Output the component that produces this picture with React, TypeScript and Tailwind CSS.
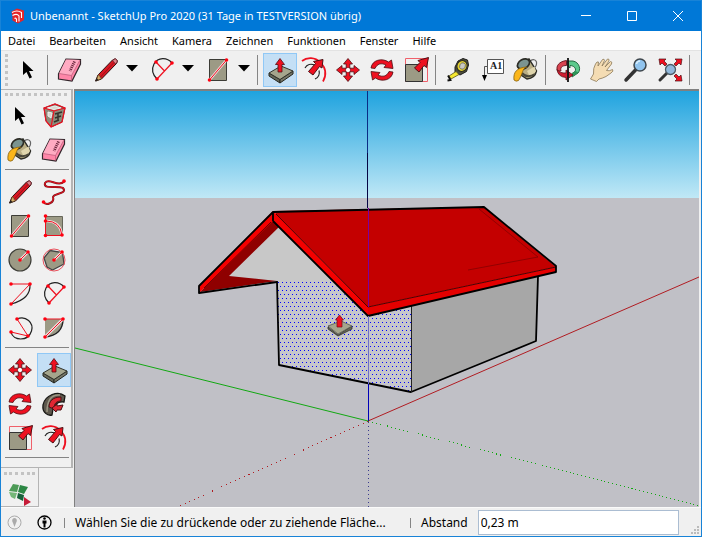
import type { ReactNode } from "react";

const RED = "#ee1020";
const STONE = "#9c9a85";

function Dots({ at }: { at: [number, number][] }) {
  return (
    <>
      {at.map(([x, y]) => (
        <circle key={`${x}-${y}`} cx={x} cy={y} r="1.8" fill="#ff0010" />
      ))}
    </>
  );
}

const icons: Record<string, ReactNode> = {
  select: <path d="M12 8 V22 L15.5 19 L18.5 25.5 L21 24.3 L18 18 H22.5 Z" fill="#000" />,
  eraser: (
    <>
      <path d="M13 6 L27.500 6.500 L27.500 11 L19 28 L5.500 26 L5.500 21 Z" fill="#ff86a8" stroke="#33262b" strokeWidth="1.200" />
      <path d="M13 6.500 L27 7 L18.500 22.500 L6 20.500 Z" fill="#ffabc2" />
      <path d="M6 20.500 L18.500 22.500 L27 7 M18.500 22.500 V27.500" fill="none" stroke="#c0607e" strokeWidth=".8" />
      <path d="M21.500 8.500 L17 18" stroke="#6d2a40" strokeWidth="2.800" strokeDasharray="1.200 .8" />
    </>
  ),
  pencil: (
    <>
      <path d="M6.500 28 L9 22 L23.500 7 Q26.500 4.500 28 7 Q29 9 27 11 L12.500 26 Z" fill="#d91722" stroke="#301010" />
      <path d="M9.500 21.500 L12.500 25.500 L7 28 Z" fill="#d7b06d" stroke="#5c4520" strokeWidth=".7" />
      <path d="M23.500 7.500 Q26.500 4.500 28 7 Q29 9 26.500 11 Z" fill="#dd8089" stroke="#5e2028" strokeWidth=".7" />
      <path d="M11 24.500 L25 9.500" stroke="#8f0f18" strokeWidth=".8" />
      <path d="M6.500 28.500 l3 -1.500 l-2 -2 Z" fill="#222" />
    </>
  ),
  arc: (
    <>
      <path d="M27 10 C22 4 13 4 9 11 C6 17 8 22 12 26" fill="none" stroke="#222" strokeWidth="1.200" />
      <path d="M27 10 L12 26 M11 9 L19.500 18" stroke={RED} strokeWidth="1.200" />
      <Dots at={[[11, 9], [27, 10], [12, 26]]} />
    </>
  ),
  rect: (
    <>
      <path d="M8.500 6.500 H25.500 V27.500 H8.500 Z" fill={STONE} stroke="#3c3c36" />
      <path d="M8.500 27 L25.500 7" stroke="#f4dede" strokeWidth="2.600" />
      <path d="M8.500 27 L25.500 7" stroke={RED} />
      <Dots at={[[8.500, 27], [25.500, 7]]} />
    </>
  ),
  push: (
    <>
      <path d="M6 20 L17 26.500 V30 L6 23 Z" fill="#66675a" stroke="#25261f" />
      <path d="M30 18 L17 26.500 V30 L30 21 Z" fill="#777768" stroke="#25261f" />
      <path d="M6 20 L18 13 L30 18 L17 26.500 Z" fill="#a5a58d" stroke="#33342b" />
      <path d="M17 5.500 L21.500 11.500 H19 V19 H15 V11.500 H12.500 Z" fill={RED} stroke="#501014" strokeWidth=".8" />
    </>
  ),
  offset: (
    <>
      <path d="M5 8 C10 4 18 4 23.500 9.500 C29 15 29.500 22 26 28.500" fill="none" stroke={RED} strokeWidth="1.700" />
      <path d="M8 15 C10 11.500 14 10.500 17.500 12 M22 17.500 C23 21 21.500 24.500 18 26" fill="none" stroke="#222" strokeWidth="1.200" />
      <path d="M26 6.500 L25 15 L22.500 13.500 L16 22 L11.500 18.500 L18.500 10.500 L16.500 8.500 Z" fill={RED} stroke="#4b1014" />
    </>
  ),
  move: (
    <g fill={RED} stroke="#4b1014" strokeWidth=".8">
      {[0, 90, 180, 270].map((r) => (
        <path key={r} transform={`rotate(${r} 17 17)`} d="M17 5.500 L21.500 11 H18.800 V15 H15.200 V11 H12.500 Z" />
      ))}
      <path d="M17 14.500 L19.500 17 L17 19.500 L14.500 17 Z" fill="#fff" stroke="none" />
    </g>
  ),
  rotate: (
    <g fill={RED} stroke="#4b1014" strokeWidth=".8">
      {[0, 180].map((r) => (
        <path key={r} transform={`rotate(${r} 17 17)`} d="M6 15 C7 7 17 4.500 23.500 9 L26.500 7 L28 15.500 L19 14.500 L21 12 C16 9.500 12 11 10 15.500 Z" />
      ))}
    </g>
  ),
  scale: (
    <>
      <path d="M6.500 5.500 H28.500 V28.500 H6.500 Z" fill="none" stroke="#f0606a" />
      <path d="M6.500 11.500 H23.500 V28.500 H6.500 Z" fill={STONE} stroke="#333" />
      <path d="M29.500 4.500 L27.500 14.500 L25 12.500 L20 19 L15.500 15 L21 9.500 L19 7.500 Z" fill={RED} stroke="#4b1014" />
    </>
  ),
  tape: (
    <>
      <path d="M14 14 L17 8 L22 5.500 L26.500 7 L27.500 12 L25.500 18.500 L19 22 L14 19 Z" fill="#4d4e3d" stroke="#1c1c1c" />
      <ellipse cx="21" cy="13" rx="5" ry="5.500" transform="rotate(25 21 13)" fill="#e5d331" stroke="#2a2a20" />
      <ellipse cx="21.500" cy="13" rx="2.800" ry="3.300" transform="rotate(25 21.5 13)" fill="#c9c9c2" stroke="#6e6e60" strokeWidth=".8" />
      <path d="M18 21.500 L10 26 L8 23 L15 18.500 Z" fill="#f5e830" stroke="#55501a" strokeWidth=".8" />
      <path d="M7 22.500 L9.500 27 L6.500 27.500" fill="none" stroke="#111" strokeWidth="1.800" />
    </>
  ),
  text: (
    <>
      <path d="M12.500 6.500 H28.500 V20.500 H12.500 Z" fill="#fff" stroke="#555" />
      <text x="15" y="16" fontSize="10" fontFamily="Liberation Serif, serif" fontWeight="700" fill="#222">A1</text>
      <path d="M12 13.500 H9.500 V23" fill="none" stroke="#555" />
      <path d="M7 22 H12 L9.500 28 Z" fill="#000" />
    </>
  ),
  paint: (
    <>
      <path d="M21 8 Q26 5 27.500 9 Q28 13 25 15" fill="none" stroke="#666" strokeWidth="1.200" />
      <path d="M9 12 L20 6 L27.500 18 Q26 25 18 26 L12 22 Z" fill="#b9ae85" stroke="#2c2c26" strokeWidth="1.400" />
      <path d="M18 18 L25.500 13.500 L27 18 Q25 22 20.500 23 Z" fill="#e0d6ad" />
      <path d="M13 20 Q18 26 26 21" fill="none" stroke="#4a483a" strokeWidth="2" />
      <ellipse cx="14.500" cy="11" rx="6.500" ry="4.500" transform="rotate(-30 14.500 11)" fill="#7b9490" stroke="#2c2c26" strokeWidth="1.700" />
      <path d="M18 14 C13 15 14 21 9.500 27.500 Q7 29 5 27 C4 19 8 14.500 18 14 Z" fill="#fbb61b" stroke="#84600f" strokeWidth=".8" />
    </>
  ),
  orbit: (
    <>
      <path d="M17 8 H22 C29 9.500 30 17 27 20 L21 24 V20.500 L24 18.500 C26 15 22 12.500 19 12.500 V15 L17 13 Z" fill="#5cc98c" stroke="#175d34" strokeWidth=".9" />
      <path d="M24.500 18 L27.500 19.500 L21 24 V20.500 Z" fill="#2f9558" />
      <path d="M15.500 7.500 C8 8.500 4.500 13 6.500 18 L10 18 C9 14.500 11 12.500 15.500 12.500 Z" fill="#d84450" stroke="#601018" strokeWidth=".9" />
      <path d="M6 16.500 Q9 20.500 15 20 V17 L22 22 L15 27 V24.500 Q7 24 6 16.500 Z" fill="#cf1c30" stroke="#601018" strokeWidth=".8" />
      <path d="M17 5 V29" stroke="#111" strokeWidth="1.800" />
    </>
  ),
  hand: (
    <path
      d="M5.500 26 L8.500 21 Q8 15 10.500 11 Q12 8 13.500 9 L13 13 L17.500 6.500 Q19.500 5.500 19.500 7.500 L17 13 L22.500 6 Q24.500 5.500 24 8 L20 14 L25.500 8.500 Q27.500 8.500 26.500 11 L21.500 17.500 Q24 18.500 27.500 16.500 Q29 18 26 20 L21 23.500 Q17 25.500 14 26 L11.500 28.500 Z"
      fill="#f4dcb3"
      stroke="#8b7858"
      strokeWidth=".8"
    />
  ),
  zoom: (
    <>
      <path d="M16.500 17 L7 27" stroke="#333" strokeWidth="3.500" strokeLinecap="round" />
      <circle cx="21" cy="12" r="6" fill="#91c4ee" stroke="#3e464c" strokeWidth="1.500" />
      <path d="M17.500 11 Q18 8 21 8" fill="none" stroke="#d9effe" strokeWidth="1.500" />
    </>
  ),
  extents: (
    <>
      <path d="M14 20 L7 27" stroke="#333" strokeWidth="3" strokeLinecap="round" />
      <g fill={RED} stroke="#4b1014" strokeWidth=".7">
        <path d="M6 6 H13 L11 8 L14 11 L12 13 L9 10 L7 12 Z" />
        <path d="M29 6 H22 L24 8 L21 11 L23 13 L26 10 L28 12 Z" />
        <path d="M29 28 H22 L24 26 L21 23 L23 21 L26 24 L28 22 Z" />
      </g>
      <circle cx="17.500" cy="16.500" r="5" fill="#91b9dc" stroke="#4c5b66" strokeWidth="1.300" />
    </>
  ),
  component: (
    <>
      <path d="M7 9 L18 5 L28 9 L25 23 L14 28 L9 22 Z" fill="#8d8b7a" stroke="#444" />
      <path d="M10 9 L18 7 L24 9 L17 10.500 Z M11 13 L15 14 L14 19 L11 17 Z" fill="#dad8ce" stroke="#eee" />
      <path d="M18 15 L25 13 M18 19 L24 17 M17 23 L22 21 M21 14 V21" stroke="#33332c" strokeWidth="1.500" />
      <path d="M7 9 L17 12 L28 9 L25 23 L14 28 L9 22 Z M17 12 L14 28 M7 9 L18 5 L28 9" fill="none" stroke={RED} strokeWidth="1.200" />
    </>
  ),
  freehand: (
    <>
      <path d="M28 6 C21 13 12 2 8 8 C6 15 20 10 26 13 C31 19 17 18 16 22 C18 28 9 31 6.500 27" fill="none" stroke="#7d1519" strokeWidth="2" />
      <path d="M28 6 C21 13 12 2 8 8 C6 15 20 10 26 13 C31 19 17 18 16 22 C18 28 9 31 6.500 27" fill="none" stroke={RED} />
      <Dots at={[[27, 6], [6.500, 27]]} />
    </>
  ),
  rotRect: (
    <>
      <path d="M8.500 7.500 H25.500 V26.500 H8.500 Z" fill={STONE} stroke="#666659" />
      <path d="M9 12 Q23 12 25 26" fill="none" stroke="#f4dede" strokeWidth="2.600" />
      <path d="M8.500 7 V26.500 H25 M9 12 Q23 12 25 26" fill="none" stroke={RED} />
      <Dots at={[[8.500, 7], [8.500, 12], [8.500, 26.500], [25, 26]]} />
    </>
  ),
  circle: (
    <>
      <circle cx="17" cy="17" r="11" fill={STONE} stroke="#3d3d37" strokeWidth="1.200" />
      <path d="M17 17 L25 9" stroke="#f4dede" strokeWidth="2.600" />
      <path d="M17 17 L25 9" stroke={RED} />
      <Dots at={[[17, 17], [25, 9]]} />
    </>
  ),
  polygon: (
    <>
      <path d="M7 15 L13 7.500 L25.500 9.500 L27 21 L15.500 27 L10 24 Z" fill={STONE} stroke="#444" strokeWidth="1.300" />
      <circle cx="17" cy="17" r="11" fill="none" stroke="#e9525d" />
      <path d="M17 17 L25 9" stroke="#f4dede" strokeWidth="2.600" />
      <path d="M17 17 L25 9" stroke={RED} />
      <Dots at={[[17, 17], [25, 9]]} />
    </>
  ),
  arcCenter: (
    <>
      <path d="M27 7 Q28 22 8 27" fill="none" stroke="#222" strokeWidth="1.200" />
      <path d="M8 7 H27 L8 27" fill="none" stroke={RED} />
      <Dots at={[[8, 7], [27, 7], [8, 27]]} />
    </>
  ),
  arc3: (
    <>
      <path d="M14 8 C23 4 31 12 28.500 20 C25 31 10 30 8 21" fill="none" stroke="#222" strokeWidth="1.200" />
      <path d="M14 8 L25 25 L8 21" fill="none" stroke={RED} />
      <Dots at={[[14, 8], [8, 21], [25, 25]]} />
    </>
  ),
  pie: (
    <>
      <path d="M8 8 H26 Q26 22 8 26 Z" fill={STONE} />
      <path d="M26 8 Q26 24 8 26" fill="none" stroke="#222" strokeWidth="1.400" />
      <path d="M8 26 L26 8" stroke="#f4dede" strokeWidth="3" />
      <path d="M8 8 H26 L8 26" fill="none" stroke={RED} />
      <Dots at={[[8, 8], [26, 8], [8, 26]]} />
    </>
  ),
  follow: (
    <>
      <path d="M28 9 C21 3 8 8 6 18 C5 26 11 29 15 28 L16 22 C19 20 18 14 27 15 Z" fill="#5d584d" stroke="#171714" strokeWidth="1.300" />
      <path d="M23 8 C14 7 10 14 10 25" fill="none" stroke="#9c9683" strokeWidth="1.500" />
      <path d="M24 10 C15 10 12 15 12 20 L17 22 C17 16 20 14 24 14 Z" fill="#df2733" stroke="#4b1014" />
      <path d="M15 21 L20 17 L20 19 L26 18 L24 23 L20 23 L19 25 Z" fill="#df2733" stroke="#4b1014" />
    </>
  ),
};

function Tool({ icon, label, active = false }: { icon: string; label: string; active?: boolean }) {
  return (
    <button
      type="button"
      aria-label={label}
      aria-pressed={active}
      className={`size-[34px] shrink-0 ${active ? "border border-[#90c8f6] bg-[#c4dff5]" : "hover:bg-[#dcebf7]"}`}
    >
      <svg viewBox="0 0 34 34" className={active ? "-m-px size-[34px] max-w-none" : "size-[34px]"} fill="none" aria-hidden="true">
        {icons[icon]}
      </svg>
    </button>
  );
}

function SplitTool({ icon, label }: { icon: string; label: string }) {
  return (
    <div className="mx-[2px] flex items-center">
      <Tool icon={icon} label={label} />
      <button type="button" aria-label={`${label} – Auswahl`} className="flex h-[34px] w-[18px] items-center justify-center pb-1">
        <svg viewBox="0 0 12 7" className="h-[7px] w-3" aria-hidden="true">
          <path d="M0 0 H12 L6 6.500 Z" fill="#000" />
        </svg>
      </button>
    </div>
  );
}

function Divider() {
  return <div className="mr-[5px] ml-[2px] h-[30px] w-px shrink-0 bg-[#858585]" />;
}

function Rule() {
  return <div className="mx-[2px] mt-[2px] mb-[5px] h-px bg-[#858585]" />;
}

function Grid({ tools }: { tools: [string, string, boolean?][] }) {
  return (
    <div className="grid grid-cols-[34px_34px]">
      {tools.map(([icon, label, active]) => (
        <Tool key={label} icon={icon} label={label} active={active} />
      ))}
    </div>
  );
}

function HouseScene() {
  return (
    <svg
      viewBox="75 91 624 416"
      preserveAspectRatio="xMidYMid slice"
      className="absolute inset-0 h-full w-full"
      fill="none"
      role="img"
      aria-label="Haus mit rotem Dach"
    >
      <defs>
        <linearGradient id="sky" x1="0" y1="0" x2="0" y2="1">
          <stop offset="0" stopColor="#1fa3df" />
          <stop offset="1" stopColor="#c0e8f6" />
        </linearGradient>
        <pattern id="selection" width="4" height="8" patternUnits="userSpaceOnUse">
          <rect x="2" y="2" width="1" height="1" fill="#0000ff" />
          <rect x="0" y="6" width="1" height="1" fill="#0000ff" />
        </pattern>
      </defs>
      <rect x="75" y="91" width="624" height="107" fill="url(#sky)" />
      <rect x="75" y="198" width="624" height="309" fill="#c0c0c6" />

      <path d="M75 348 L368 421" stroke="#12a812" />
      <path d="M368 421 L699 506" stroke="#12a812" strokeDasharray="1 3" shapeRendering="crispEdges" />
      <path d="M368 421 L699 277" stroke="#b01c22" />
      <path d="M368 421 L177 507" stroke="#b01c22" strokeDasharray="1 4" shapeRendering="crispEdges" />
      <path d="M368.500 422 V507" stroke="#3a3a8c" strokeDasharray="1 3" />

      <path d="M411 306 L538 276 L536 341 L411 392 Z" fill="#a7a7a7" />
      <path d="M273 221 L229 276 L277 281 L279 365 L411 392 V306 L368 315 Z" fill="#c8c8c8" />
      <path d="M277 281 L330 281 L368 316 L411 306 V392 L279 365 Z" fill="#c6c6cb" />
      <path d="M277 281 L330 281 L368 316 L411 306 V392 L279 365 Z" fill="url(#selection)" />
      <path d="M277 281 L279 365 L411 392 L536 341 L538 276" stroke="#000" strokeWidth="1.800" strokeLinejoin="round" />
      <path d="M411.500 306 V392" stroke="#222" />

      <path d="M272 220 L279 227 L229 276 L277 281 L200 292 Z" fill="#8f0000" />
      <path d="M273 211 V221 L200 292 L199 286 Z" fill="#f40000" />
      <path d="M273 211 L484 207 L556 267 L368 307 Z" fill="#c40000" />
      <path d="M273 211 L368 307 V316 L273 221 Z" fill="#f40000" />
      <path d="M368 307 L556 267 V272 L368 316 Z" fill="#e40000" />
      <path d="M276 214 L368 307 L556 267" stroke="#4a0000" />
      <path d="M479 209 L538 257 L468 270" stroke="#850000" strokeWidth=".8" />
      <path d="M273 221 L368 316 L556 272 V266 L484 207 L273 212 L199 286 V293 L277 282 M273 212 V221" stroke="#000" strokeWidth="1.800" strokeLinejoin="round" />
      <path d="M271 222 L204 288" stroke="#6a0000" />

      <path d="M367.500 91 V153" stroke="#0a2c86" />
      <path d="M367.500 153 V208" stroke="#050545" />
      <path d="M368.500 208 V307" stroke="#7b00a0" />
      <path d="M368.500 316 V384" stroke="#6d6dc8" />
      <path d="M368.500 384 V421" stroke="#0000b8" />

      <path d="M328 327 L338 335 L352 326 V329 L338 336 L328 329 Z" fill="#66675a" stroke="#33342b" strokeWidth=".8" />
      <path d="M328 326 L341 321 L352 326 L338 334 Z" fill="#a5a58d" stroke="#55564a" strokeWidth=".8" />
      <path d="M339.500 315 L343.500 320 H342 V327 H337 V320 H335.500 Z" fill={RED} stroke="#701014" strokeWidth=".7" />
    </svg>
  );
}

const menus = ["Datei", "Bearbeiten", "Ansicht", "Kamera", "Zeichnen", "Funktionen", "Fenster", "Hilfe"];

export default function App() {
  return (
    <div className="flex h-screen flex-col overflow-hidden border border-[#1883d7] bg-[#f0f0f0] font-['Noto_Sans','Open_Sans',sans-serif] text-[11px] text-black">
      <header className="flex h-[30px] shrink-0 items-center bg-[#0078d7] pl-[9px] text-white">
        <svg viewBox="0 0 16 16" className="size-4 shrink-0" fill="none" aria-hidden="true">
          <path d="M1.500 3.500 L7 .5 L14 2.500 V12 L8 15.500 L2.500 12.500 V9 Z" fill="#e52629" />
          <path d="M2 4.500 Q7 1.500 11.500 4.500 V10 M2.500 7.500 Q7 5 9 8 V13.500 M4.500 10.500 Q6 9.500 6.500 11.500 V14" stroke="#fff" strokeWidth="1.100" />
        </svg>
        <h1 className="ml-1 min-w-0 flex-1 truncate">Unbenannt - SketchUp Pro 2020 (31 Tage in TESTVERSION übrig)</h1>
        <div className="flex">
          <button type="button" aria-label="Minimieren" className="flex h-[30px] w-[46px] items-center justify-center">
            <svg viewBox="0 0 10 10" className="size-[10px]"><path d="M0 4.500 H10" stroke="#fff" /></svg>
          </button>
          <button type="button" aria-label="Maximieren" className="flex h-[30px] w-[46px] items-center justify-center">
            <svg viewBox="0 0 10 10" className="size-[10px]"><path d="M.5 .5 H9.500 V9.500 H.5 Z" fill="none" stroke="#fff" /></svg>
          </button>
          <button type="button" aria-label="Schließen" className="flex h-[30px] w-[46px] items-center justify-center">
            <svg viewBox="0 0 10 10" className="size-[10px]"><path d="M0 0 L10 10 M10 0 L0 10" stroke="#fff" /></svg>
          </button>
        </div>
      </header>

      <nav className="flex h-[19px] shrink-0 items-center bg-white">
        {menus.map((m) => (
          <button type="button" key={m} className="px-[7px] leading-[18px] hover:bg-[#e5f3ff]">{m}</button>
        ))}
      </nav>

      <div className="flex h-[39px] shrink-0 items-center border-t border-[#e3e3e3] pl-1">
        <div className="mr-[3px] h-8 w-[3px] border-l-[3px] border-dotted border-[#c3c3c3]" />
        <Tool icon="select" label="Auswählen" />
        <Divider />
        <Tool icon="eraser" label="Radiergummi" />
        <SplitTool icon="pencil" label="Linie" />
        <SplitTool icon="arc" label="Bogen" />
        <SplitTool icon="rect" label="Rechteck" />
        <Divider />
        <Tool icon="push" label="Drücken/Ziehen" active />
        <Tool icon="offset" label="Versatz" />
        <Tool icon="move" label="Verschieben" />
        <Tool icon="rotate" label="Drehen" />
        <Tool icon="scale" label="Skalieren" />
        <Divider />
        <Tool icon="tape" label="Maßband" />
        <Tool icon="text" label="Text" />
        <Tool icon="paint" label="Farbeimer" />
        <Divider />
        <Tool icon="orbit" label="Rotieren" />
        <Tool icon="hand" label="Schwenken" />
        <Tool icon="zoom" label="Zoom" />
        <Tool icon="extents" label="Volle Zoomgröße" />
        <Divider />
      </div>

      <div className="flex min-h-0 flex-1">
        <aside className="flex w-[72px] shrink-0 flex-col">
          <div className="min-h-0 flex-1 border-t border-r-2 border-b border-[#b4b4b4] pt-[3px] pl-[2px]">
            <div className="mr-1 mb-[3px] ml-[2px] border-t-[3px] border-dotted border-[#c3c3c3]" />
            <Grid
              tools={[
                ["select", "Auswahlwerkzeug"],
                ["component", "Komponente erstellen"],
                ["paint", "Materialien"],
                ["eraser", "Radieren"],
              ]}
            />
            <Rule />
            <Grid
              tools={[
                ["pencil", "Linie zeichnen"],
                ["freehand", "Freihand"],
                ["rect", "Rechteck zeichnen"],
                ["rotRect", "Gedrehtes Rechteck"],
                ["circle", "Kreis"],
                ["polygon", "Polygon"],
                ["arcCenter", "Bogen mit Zentrum"],
                ["arc", "2-Punkt-Bogen"],
                ["arc3", "3-Punkt-Bogen"],
                ["pie", "Kreisbogen"],
              ]}
            />
            <Rule />
            <Grid
              tools={[
                ["move", "Verschieben"],
                ["push", "Drücken/Ziehen", true],
                ["rotate", "Drehen"],
                ["follow", "Folge mir"],
                ["scale", "Skalieren"],
                ["offset", "Versatz"],
              ]}
            />
            <Rule />
          </div>
          <div className="h-[39px] w-[38px] shrink-0 border-r border-b border-[#b4b4b4] pt-1">
            <div className="mx-[3px] border-t-[3px] border-dotted border-[#c3c3c3]" />
            <button type="button" aria-label="Gelände" className="block">
              <svg viewBox="0 0 37 32" className="h-8 w-[37px]" aria-hidden="true">
                <path d="M12 9 L18 10 L16 17 L8 16 Z" fill="#4d9b57" />
                <path d="M19 10 L27 12 L23 19 L17 17 Z" fill="#2c8744" />
                <path d="M8 17 L16 18 L14 24 L10 22 Z" fill="#75b779" />
                <path d="M17 18 L23 20 L22 26 L16 23 Z" fill="#17623b" />
                <path d="M23 22 L30 27 L23 31 Z" fill="#c61c38" />
              </svg>
            </button>
          </div>
        </aside>
        <main className="relative mr-[2px] ml-px min-w-0 flex-1 border-t-2 border-l border-[#808080]">
          <HouseScene />
        </main>
      </div>

      <footer className="flex h-[29px] shrink-0 items-center border-t border-[#fafafa] pt-px text-xs">
        <button type="button" aria-label="Geoposition" className="ml-[6px] size-[15px]">
          <svg viewBox="0 0 15 15" className="size-[15px]">
            <circle cx="7.500" cy="7.500" r="6.500" fill="none" stroke="#aaa" />
            <path d="M7.500 12 L6 8 Q4.500 6 5.500 4 Q7.500 2 9.500 4 Q10.500 6 9 8 Z" fill="#aaa" />
          </svg>
        </button>
        <button type="button" aria-label="Urheberinformationen" className="ml-[15px] size-[15px]">
          <svg viewBox="0 0 15 15" className="size-[15px]">
            <circle cx="7.500" cy="7.500" r="6.500" fill="none" stroke="#000" strokeWidth="1.300" />
            <circle cx="7.500" cy="3.500" r="1.300" />
            <path d="M5.500 5.500 H9.500 V8.500 H8.500 V12.500 H6.500 V8.500 H5.500 Z" />
          </svg>
        </button>
        <div className="ml-3 h-[10px] w-px bg-[#858585]" />
        <output className="ml-[10px] min-w-[322px] whitespace-nowrap">Wählen Sie die zu drückende oder zu ziehende Fläche...</output>
        <div className="ml-[13px] h-[10px] w-px bg-[#858585]" />
        <label htmlFor="distance" className="ml-[10px]">Abstand</label>
        <input
          id="distance"
          defaultValue="0,23 m"
          className="ml-[10px] h-[25px] min-w-0 flex-1 border border-[#abbdd2] bg-white pl-[2px] outline-none"
        />
        <svg viewBox="0 0 22 28" className="h-7 w-[22px] shrink-0" aria-hidden="true">
          <path d="M18 17 h2 v2 h-2z M15 20 h2 v2 h-2z M18 20 h2 v2 h-2z M12 23 h2 v2 h-2z M15 23 h2 v2 h-2z M18 23 h2 v2 h-2z" fill="#bbb" />
        </svg>
      </footer>
    </div>
  );
}
